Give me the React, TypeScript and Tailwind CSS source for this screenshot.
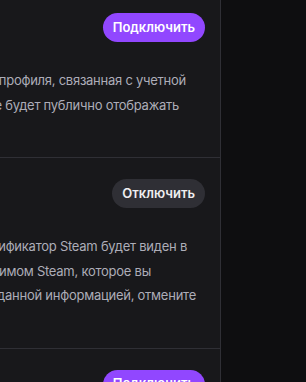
import React from "react";

const Line = ({ text, mr }: { text: string; mr: string }) => (
  <div className={`flex justify-end whitespace-nowrap ${mr}`}>
    <span>{text}</span>
  </div>
);

export default function App() {
  return (
    <div
      className="flex h-[382px] w-[306px] overflow-hidden bg-[#0e0e10]"
      style={{ fontFamily: "Inter, 'Noto Sans', sans-serif" }}
    >
      <div className="flex w-[221px] shrink-0 flex-col border-r border-[#2f2f35] bg-[#18181b]">
        {/* Section 1 */}
        <div className="flex flex-col border-b border-[#2f2f35] pb-[39px] pr-[15px] pt-[13px]">
          <div className="flex justify-end">
            <button className="h-[29px] rounded-full bg-[#9147ff] px-[10px] text-[13px] font-semibold text-white">
              Подключить
            </button>
          </div>
          <div className="mt-[26px] text-[13px] leading-[25px] tracking-[-0.25px] text-[#adadb8]">
            <Line text="Информация профиля, связанная с учетной" mr="mr-[19px]" />
            <Line text="записью, не будет публично отображать" mr="mr-[26px]" />
          </div>
        </div>
        {/* Section 2 */}
        <div className="flex flex-col border-b border-[#2f2f35] pb-[40px] pr-[15px] pt-[21px]">
          <div className="flex justify-end">
            <button className="h-[29px] rounded-full bg-[#2f2f35] px-[10px] text-[13px] font-semibold text-[#efeff1]">
              Отключить
            </button>
          </div>
          <div className="mt-[26px] text-[13px] leading-[24.5px] tracking-[-0.25px] text-[#adadb8]">
            <Line text="Ваш идентификатор Steam будет виден в" mr="mr-[18px]" />
            <Line text="сочетании с отображаемым псевдонимом Steam, которое вы" mr="mr-[54px]" />
            <Line text="указали. Чтобы не делиться данной информацией, отмените" mr="mr-[9px]" />
          </div>
        </div>
        {/* Section 3 */}
        <div className="flex flex-col pr-[15px] pt-[21px]">
          <div className="flex justify-end">
            <button className="h-[29px] rounded-full bg-[#9147ff] px-[10px] text-[13px] font-semibold text-white">
              Подключить
            </button>
          </div>
        </div>
      </div>
      <div className="flex-1" />
    </div>
  );
}
